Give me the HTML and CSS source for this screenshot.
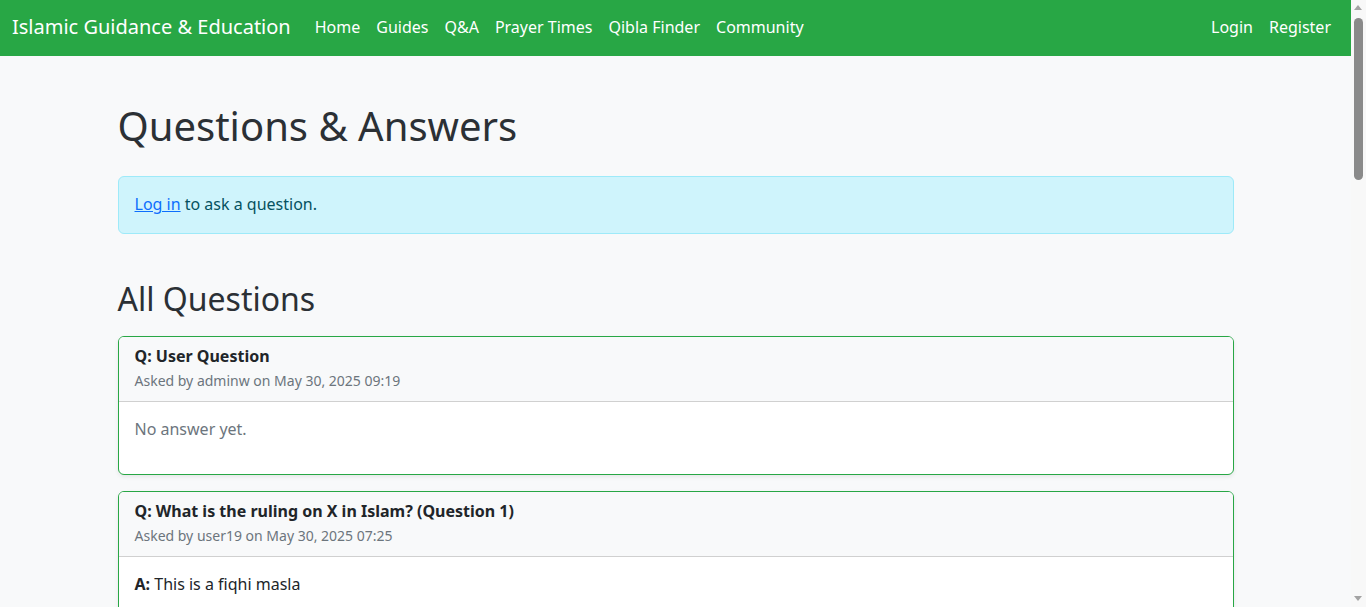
FILE: index.html
```html
<!DOCTYPE html>
<html lang="en">
<head>
<meta charset="utf-8">
<title>Questions &amp; Answers</title>
<link rel="stylesheet" href="styles.css">
</head>
<body>
<div class="page">
<nav class="navbar">
  <div class="nav-inner">
    <a class="brand" href="#">Islamic Guidance &amp; Education</a>
    <ul class="nav-links">
      <li><a href="#">Home</a></li>
      <li><a href="#">Guides</a></li>
      <li><a href="#">Q&amp;A</a></li>
      <li><a href="#">Prayer Times</a></li>
      <li><a href="#">Qibla Finder</a></li>
      <li><a href="#">Community</a></li>
    </ul>
    <ul class="nav-links nav-right">
      <li><a href="#">Login</a></li>
      <li><a href="#">Register</a></li>
    </ul>
  </div>
</nav>

<main class="container">
  <h1 class="page-title">Questions &amp; Answers</h1>
  <div class="alert"><a href="#">Log in</a> to ask a question.</div>

  <h2 class="section-title">All Questions</h2>

  <div class="card">
    <div class="card-header">
      <div class="q-title">Q: User Question</div>
      <div><small class="muted">Asked by adminw on May 30, 2025 09:19</small></div>
    </div>
    <div class="card-body">
      <p class="muted">No answer yet.</p>
    </div>
  </div>

  <div class="card">
    <div class="card-header">
      <div class="q-title">Q: What is the ruling on X in Islam? (Question 1)</div>
      <div><small class="muted">Asked by user19 on May 30, 2025 07:25</small></div>
    </div>
    <div class="card-body">
      <p><strong>A:</strong> This is a fiqhi masla</p>
      <p><small class="muted">Answered by admin on May 30, 2025 08:10</small></p>
    </div>
  </div>

  <div class="card">
    <div class="card-header">
      <div class="q-title">Q: What is the ruling on X in Islam? (Question 2)</div>
      <div><small class="muted">Asked by user18 on May 30, 2025 07:25</small></div>
    </div>
    <div class="card-body">
      <p class="muted">No answer yet.</p>
    </div>
  </div>

  <div class="card">
    <div class="card-header">
      <div class="q-title">Q: What is the ruling on X in Islam? (Question 3)</div>
      <div><small class="muted">Asked by user17 on May 30, 2025 07:25</small></div>
    </div>
    <div class="card-body">
      <p class="muted">No answer yet.</p>
    </div>
  </div>

  <div class="card">
    <div class="card-header">
      <div class="q-title">Q: What is the ruling on X in Islam? (Question 4)</div>
      <div><small class="muted">Asked by user16 on May 30, 2025 07:25</small></div>
    </div>
    <div class="card-body">
      <p class="muted">No answer yet.</p>
    </div>
  </div>

  <div class="card">
    <div class="card-header">
      <div class="q-title">Q: What is the ruling on X in Islam? (Question 5)</div>
      <div><small class="muted">Asked by user15 on May 30, 2025 07:25</small></div>
    </div>
    <div class="card-body">
      <p class="muted">No answer yet.</p>
    </div>
  </div>

  <div class="card">
    <div class="card-header">
      <div class="q-title">Q: What is the ruling on X in Islam? (Question 6)</div>
      <div><small class="muted">Asked by user14 on May 30, 2025 07:25</small></div>
    </div>
    <div class="card-body">
      <p class="muted">No answer yet.</p>
    </div>
  </div>

  <div class="card">
    <div class="card-header">
      <div class="q-title">Q: What is the ruling on X in Islam? (Question 7)</div>
      <div><small class="muted">Asked by user13 on May 30, 2025 07:25</small></div>
    </div>
    <div class="card-body">
      <p class="muted">No answer yet.</p>
    </div>
  </div>

  <div class="card">
    <div class="card-header">
      <div class="q-title">Q: What is the ruling on X in Islam? (Question 8)</div>
      <div><small class="muted">Asked by user12 on May 30, 2025 07:25</small></div>
    </div>
    <div class="card-body">
      <p class="muted">No answer yet.</p>
    </div>
  </div>

  <div class="card">
    <div class="card-header">
      <div class="q-title">Q: What is the ruling on X in Islam? (Question 9)</div>
      <div><small class="muted">Asked by user11 on May 30, 2025 07:25</small></div>
    </div>
    <div class="card-body">
      <p class="muted">No answer yet.</p>
    </div>
  </div>

  <div class="card">
    <div class="card-header">
      <div class="q-title">Q: What is the ruling on X in Islam? (Question 10)</div>
      <div><small class="muted">Asked by user10 on May 30, 2025 07:25</small></div>
    </div>
    <div class="card-body">
      <p class="muted">No answer yet.</p>
    </div>
  </div>
</main>
</div>

<div class="scrollbar" aria-hidden="true">
  <span class="sb-arrow sb-up"></span>
  <span class="sb-thumb"></span>
  <span class="sb-arrow sb-down"></span>
</div>
</body>
</html>
```

FILE: styles.css
```css
*, *::before, *::after { box-sizing: border-box; }

html, body { margin: 0; padding: 0; }

body {
  font-family: "Noto Sans", "Open Sans", sans-serif;
  font-size: 16px;
  line-height: 1.5;
  color: #212529;
  background: #f8f9fa;
}

.page { margin-right: 15px; }

a { color: #0d6efd; }

.navbar {
  background: #28a745;
  padding: 8px 0;
}

.nav-inner {
  display: flex;
  align-items: center;
  padding: 0 12px;
}

.brand {
  color: #fff;
  text-decoration: none;
  font-size: 20px;
  line-height: 30px;
  padding: 4px 0 6px;
  margin-right: 16px;
  white-space: nowrap;
}

.nav-links {
  display: flex;
  list-style: none;
  margin: 0;
  padding: 0;
}

.nav-links a {
  display: block;
  color: #fff;
  text-decoration: none;
  padding: 7px 8px 9px;
  line-height: 24px;
}

.nav-right { margin-left: auto; }

.container {
  width: 1140px;
  margin: 46px auto 0;
  padding: 0 12px;
}

.page-title {
  font-size: 40px;
  font-weight: 400;
  line-height: 1.2;
  margin: 0 0 26px;
  color: #2b3035;
}

.alert {
  background: #cff4fc;
  border: 1px solid #9eeaf9;
  color: #055160;
  border-radius: 6px;
  padding: 15px 16px 17px;
  margin-bottom: 16px;
}

.alert a { color: #0d6efd; }

.section-title {
  font-size: 32px;
  font-weight: 400;
  line-height: 1.2;
  margin: 46px 0 18px;
  color: #2b3035;
}

.card {
  background: #fff;
  border: 1px solid #28a745;
  border-radius: 6px;
  box-shadow: 0 2px 4px rgba(0, 0, 0, 0.075);
  margin-bottom: 16px;
  overflow: hidden;
}

.card-header {
  background: #f8f9fa;
  border-bottom: 1px solid #d0d0d0;
  padding: 7px 16px 9px;
}

.q-title {
  font-weight: 700;
  color: #212529;
}

.muted { color: #6c757d; }

small { font-size: 14px; }

.card-body { padding: 15px 16px 17px; }

.card-body p { margin: 0 0 16px; }

.scrollbar {
  position: fixed;
  top: 0;
  right: 0;
  width: 15px;
  height: 100vh;
  background: #f8f8f8;
}

.sb-arrow {
  position: absolute;
  left: 3px;
  width: 0;
  height: 0;
  border-left: 4.5px solid transparent;
  border-right: 4.5px solid transparent;
}

.sb-up {
  top: 5px;
  border-bottom: 5px solid #a3a3a3;
}

.sb-down {
  bottom: 6px;
  border-top: 5px solid #a3a3a3;
}

.sb-thumb {
  position: absolute;
  top: 18px;
  left: 3px;
  width: 9px;
  height: 162px;
  border-radius: 5px;
  background: #8a8a8a;
}
```
